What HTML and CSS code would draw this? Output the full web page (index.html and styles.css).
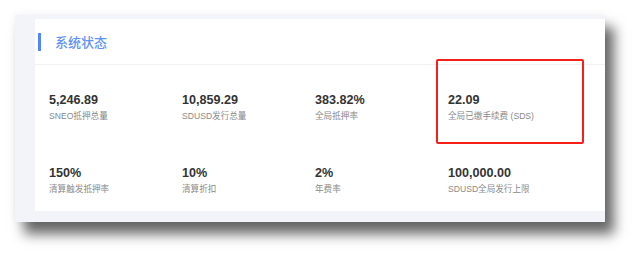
FILE: index.html
```html
<!DOCTYPE html>
<html>
  <head>
    <meta charset="utf-8" />
    <title>系统状态</title>
    <link rel="stylesheet" href="styles.css">
  </head>
  <body>
    <div class="shot">
      <div class="card">
        <div class="card-head">
          <span class="bar"></span>
          <h2>系统状态</h2>
        </div>
        <div class="stats">
          <div class="stat"><b>5,246.89</b><span>SNEO抵押总量</span></div>
          <div class="stat"><b>10,859.29</b><span>SDUSD发行总量</span></div>
          <div class="stat"><b>383.82%</b><span>全局抵押率</span></div>
          <div class="stat"><b>22.09</b><span>全局已缴手续费 (SDS)</span></div>
          <div class="stat"><b>150%</b><span>清算触发抵押率</span></div>
          <div class="stat"><b>10%</b><span>清算折扣</span></div>
          <div class="stat"><b>2%</b><span>年费率</span></div>
          <div class="stat"><b>100,000.00</b><span>SDUSD全局发行上限</span></div>
        </div>
        <!-- annotation -->
        <div class="mark"></div>
      </div>
    </div>
  </body>
</html>
```

FILE: styles.css
```css
body {
  margin: 0;
  min-height: 259px;
  padding-top: 15px;
  box-sizing: border-box;
  background: #fff;
  font-family: 'Liberation Sans', 'Noto Sans CJK SC', sans-serif;
}
.shot {
  width: 570px;
  height: 192px;
  margin-left: 15px;
  padding: 4px 0 11px 20px;
  background: #f3f4f9;
  box-shadow: 9px 12px 12px rgba(0, 0, 0, 0.6), 0 0 8px rgba(0, 0, 0, 0.06);
}
.card {
  position: relative;
  height: 192px;
  background: #fff;
}
.card-head {
  display: flex;
  align-items: center;
  height: 45px;
  padding-left: 3px;
  border-bottom: 1px solid #f0f1f5;
}
.bar {
  width: 3px;
  height: 18px;
  background: #5089f6;
}
.card-head h2 {
  margin: 0 0 0 14px;
  font-size: 13px;
  font-weight: 500;
  color: #6193f5;
}
.stats {
  display: grid;
  grid-template-columns: repeat(4, 133px);
  row-gap: 41px;
  padding: 27px 0 0 14px;
}
.stat b {
  display: block;
  font-size: 12.6px;
  line-height: 16px;
  color: #333;
}
.stat span {
  display: block;
  margin-top: 1px;
  font-size: 8.6px;
  line-height: 15px;
  color: #8a8a8a;
}
.mark {
  position: absolute;
  left: 401px;
  top: 40px;
  width: 144px;
  height: 81px;
  border: 2px solid #f5201a;
  border-radius: 2px;
}
```
